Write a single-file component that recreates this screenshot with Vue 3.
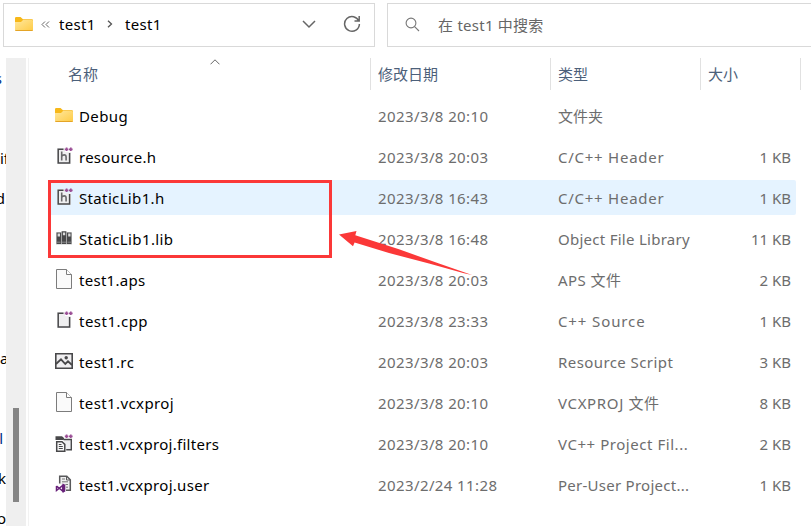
<script setup>
const files = [
  { name: 'Debug', nameGap: 0.4, date: '2023/3/8 20:10', type: '文件夹', typeGap: 0, size: '', icon: 'folder' },
  { name: 'resource.h', nameGap: 0.25, date: '2023/3/8 20:03', type: 'C/C++ Header', typeGap: 0.75, size: '1 KB', icon: 'header' },
  { name: 'StaticLib1.h', nameGap: 0.35, date: '2023/3/8 16:43', type: 'C/C++ Header', typeGap: 0.75, size: '1 KB', icon: 'header', selected: true },
  { name: 'StaticLib1.lib', nameGap: 0.38, date: '2023/3/8 16:48', type: 'Object File Library', typeGap: 0.27, size: '11 KB', icon: 'lib' },
  { name: 'test1.aps', nameGap: 0.28, date: '2023/3/8 20:03', type: 'APS 文件', typeGap: 0.45, size: '2 KB', icon: 'page' },
  { name: 'test1.cpp', nameGap: 0.48, date: '2023/3/8 23:33', type: 'C++ Source', typeGap: 0.88, size: '1 KB', icon: 'cpp' },
  { name: 'test1.rc', nameGap: 0.38, date: '2023/3/8 20:03', type: 'Resource Script', typeGap: 0.42, size: '3 KB', icon: 'image' },
  { name: 'test1.vcxproj', nameGap: 0.4, date: '2023/3/8 20:10', type: 'VCXPROJ 文件', typeGap: 0.65, size: '8 KB', icon: 'page' },
  { name: 'test1.vcxproj.filters', nameGap: 0.29, date: '2023/3/8 20:10', type: 'VC++ Project Fil...', typeGap: 0.55, size: '2 KB', icon: 'filters' },
  { name: 'test1.vcxproj.user', nameGap: 0.3, date: '2023/2/24 11:28', type: 'Per-User Project...', typeGap: 0.26, size: '1 KB', icon: 'user' },
]
// The tree panel is scrolled sideways: each row shows only the tail of its label.
const nav = [
  { text: 's', tail: 4 }, { text: '' }, { text: 'if' }, { text: 'd', tail: 1 }, { text: '' }, { text: '' },
  { text: '' }, { text: 'a' }, { text: '' }, { text: 'l', tail: 3 }, { text: 'k', tail: 0 }, { text: 'o', tail: 0 },
]
</script>

<template>
  <div class="window">
    <header class="toolbar">
      <div class="address">
        <svg class="folder" width="18" height="15" viewBox="0 0 18 15">
          <path d="M0 1.2Q0 0 1.2 0H5.5L8 2.2H17Q18 2.2 18 3.2V6H0Z" fill="#f7b819" />
          <path d="M0 5H6L8 3H17Q18 3 18 4V13Q18 14 17 14H1Q0 14 0 13Z" fill="url(#fold)" />
          <path d="M.4 13.5H17.6" stroke="#e4a427" />
        </svg>
        <svg class="dbl" width="9" height="7" viewBox="0 0 9 7"><path d="M4 .5L1 3.5L4 6.5M8 .5L5 3.5L8 6.5" /></svg>
        <span class="crumb">test1</span>
        <svg class="sep" width="6" height="8" viewBox="0 0 6 8"><path d="M1 .7L4.5 4L1 7.3" /></svg>
        <span class="crumb">test1</span>
        <svg class="down" width="14" height="9" viewBox="0 0 14 9"><path d="M1 1L7 7L13 1" /></svg>
        <svg class="refresh" width="18" height="18" viewBox="0 0 18 18"><path d="M15.9 6.2A7.4 7.4 0 1 0 16.4 9M16.2 1V6.1H11.5" /></svg>
      </div>
      <div class="search">
        <svg width="15" height="15" viewBox="0 0 15 15"><circle cx="6" cy="6" r="4.9" /><path d="M9.6 9.6L14 14" /></svg>
        <span>在 test1 中搜索</span>
      </div>
    </header>

    <main class="body">
      <nav class="tree">
        <div
          v-for="(n, i) in nav"
          :key="i"
          class="node"
          :class="{ head: i === 0 || i === 9, cut: n.tail !== undefined }"
          :style="{ paddingRight: (n.tail || 0) + 'px' }"
        >{{ n.text }}</div>
      </nav>
      <div class="scroll"><div class="thumb"></div></div>

      <section class="pane">
        <div class="columns">
          <div class="col first">
            名称
            <svg class="sort" width="10" height="6" viewBox="0 0 10 6"><path d="M.5 5.3L5 .8L9.5 5.3" /></svg>
          </div>
          <div class="col">修改日期</div>
          <div class="col">类型</div>
          <div class="col">大小</div>
        </div>

        <div class="files">
          <div v-for="f in files" :key="f.name" class="row" :class="{ selected: f.selected }">
            <div class="icon">
              <svg v-if="f.icon === 'folder'" width="20" height="22" viewBox="0 -1 20 22">
                <path d="M1 4.2Q1 3 2.2 3H6.5L9 5.2H18Q19 5.2 19 6.2V9H1Z" fill="#f7b819" />
                <path d="M1 8H7L9 6H18Q19 6 19 7V16Q19 17 18 17H2Q1 17 1 16Z" fill="url(#fold)" />
                <path d="M1.4 16.5H18.6" stroke="#e4a427" />
              </svg>
              <svg v-else-if="f.icon === 'header' || f.icon === 'cpp'" width="20" height="22" viewBox="0 0 20 22">
                <path d="M3 3H11V7H17V19H3Z" fill="#efeff0" />
                <path d="M9.5 4.2H4.2V18H15.6V8" fill="none" stroke="#48484a" stroke-width="1.5" />
                <path v-if="f.icon === 'header'" d="M7.7 6.5V15.5M7.7 11.4Q8.6 9.9 10.2 9.9Q12.1 9.9 12.1 12V15.5" fill="none" stroke="#6a6a6c" stroke-width="1.6" />
                <path d="M10.8 4.3H14.4M12.6 2.5V6.1M15 4.3H18.6M16.8 2.5V6.1" stroke="#9b4f96" stroke-width="1.7" />
              </svg>
              <svg v-else-if="f.icon === 'lib'" width="20" height="22" viewBox="0 0 20 22">
                <path d="M2 5H18V18H2Z" fill="#e2e2e2" />
                <path d="M2.5 5.5H7V17H2.5ZM7.6 4.3H12.4V17H7.6ZM13 5.5H17.5V17H13Z" fill="#48484a" />
                <path d="M3.6 6.5H6V9.5H3.6ZM8.9 5.6H11.2V8.2H8.9ZM14.2 6.5H16.5V9.5H14.2Z" fill="#dcdcdc" />
                <path d="M3 15.2H6.5M8 15.2H12M13.5 15.2H17" stroke="#8a8a8a" />
              </svg>
              <svg v-else-if="f.icon === 'page'" width="20" height="22" viewBox="0 0 20 22">
                <path d="M2.5 1.5H12.5L17.5 6.5V20.5H2.5Z" fill="#fafafa" stroke="#7c7c7c" />
                <path d="M12.5 1.5V6.5H17.5" fill="#fff" stroke="#7c7c7c" />
              </svg>
              <svg v-else-if="f.icon === 'image'" width="20" height="22" viewBox="0 -1 20 22">
                <path d="M1.8 2.8H18.2V17.2H1.8Z" fill="#f0eff1" stroke="#48484a" stroke-width="1.6" />
                <path d="M2 13L7 8.3L11.3 13L14 10.3L18 14" fill="none" stroke="#48484a" stroke-width="1.8" />
                <circle cx="12.2" cy="6.7" r="1.7" fill="#48484a" />
              </svg>
              <svg v-else-if="f.icon === 'filters'" width="20" height="22" viewBox="0 -1 20 22">
                <path d="M1.5 3.2H8L10 5V7H1.5Z" fill="#48484a" />
                <path d="M9.5 6.5H17.3V16.7H12.2" fill="#efeff0" stroke="#48484a" stroke-width="1.4" />
                <path d="M2.7 8.7H8L10.8 11.4V18.2H2.7Z" fill="#f8f8f8" stroke="#48484a" stroke-width="1.5" />
                <path d="M4.8 11.5H7.5M4.8 13.5H8.8M4.8 15.5H8.8" stroke="#48484a" />
                <path d="M10.8 3.3H14.4M12.6 1.5V5.1M15 3.3H18.6M16.8 1.5V5.1" stroke="#9b4f96" stroke-width="1.7" />
              </svg>
              <svg v-else width="20" height="22" viewBox="0 -.5 20 22">
                <path d="M5.7 10V2.7H12.8L16.3 6.2V16.7H12" fill="#efeff0" stroke="#59595b" stroke-width="1.5" />
                <path d="M12.5 3V6.5H16" fill="none" stroke="#59595b" />
                <path d="M8 5.5H11M8 8.3H14M11.5 11H14M12 13.7H14" stroke="#777" />
                <path d="M2.5 12.5V17L8.8 11.8V17.7L2.5 12.5" fill="none" stroke="#68217a" stroke-width="1.5" />
                <path d="M8.5 10L11.3 11.2V18L8.5 19.2Z" fill="#68217a" />
              </svg>
            </div>
            <div class="name" :style="{ letterSpacing: f.nameGap + 'px' }">{{ f.name }}</div>
            <div class="meta date">{{ f.date }}</div>
            <div class="meta" :style="{ letterSpacing: f.typeGap + 'px' }">{{ f.type }}</div>
            <div class="meta size">{{ f.size }}</div>
          </div>
        </div>
      </section>
    </main>

    <div class="marker"></div>
    <svg class="arrow" width="134" height="46" viewBox="0 0 134 46">
      <path d="M0 3.5L17.5 0L16.3 4.2L60 18.3L100 32.5L133 44L125 42.3L90 32.6L50 22L15.6 11.5L14 15.2Z" fill="#fb3838" />
    </svg>
    <svg class="defs" width="0" height="0">
      <defs>
        <linearGradient id="fold" x1="0" y1="0" x2="1" y2="1"><stop stop-color="#ffe79c" /><stop offset="1" stop-color="#fecb45" /></linearGradient>
      </defs>
    </svg>
  </div>
</template>

<style>
body { margin: 0; background: #fff; overflow: hidden; }
</style>

<style scoped>
.window { position: relative; width: 811px; height: 526px; overflow: hidden; background: #fff; display: flex; flex-direction: column; font-family: "Noto Sans", "Noto Sans CJK SC", sans-serif; font-size: 15px; color: #000; }
svg { display: block; flex: none; }
.toolbar { display: flex; gap: 12px; padding: 3px 0 0 3px; height: 44px; width: 820px; flex: none; }
.address, .search { box-sizing: border-box; height: 44px; border: 1px solid #d9d9d9; display: flex; align-items: center; }
.address { width: 372px; padding: 0 13px 2px 11px; }
.dbl, .sep, .down, .refresh, .search svg, .sort { fill: none; }
.dbl { margin-left: 8px; stroke: #666; }
.crumb { line-height: 20px; letter-spacing: .3px; }
.dbl + .crumb { margin-left: 9px; width: 36px; }
.sep { margin: 0 12px; stroke: #555; stroke-width: 1.3; }
.down { margin-left: auto; stroke: #666; stroke-width: 1.5; }
.refresh { margin-left: 27px; stroke: #666; stroke-width: 1.5; }
.search { flex: 1; padding: 0 0 2px 17px; color: #666; }
.search svg { stroke: #777; stroke-width: 1.1; }
.search span { margin-left: 18px; letter-spacing: .25px; }
.body { display: flex; flex: 1; padding-top: 11px; min-height: 0; }
.tree { width: 6px; overflow: hidden; }
.node { box-sizing: border-box; height: 40px; line-height: 41px; width: 6px; display: flex; }
.node.head { color: #003087; }
.node.cut { justify-content: flex-end; }
.scroll { width: 20px; background: #efefef; display: flex; flex-direction: column; align-items: center; }
.thumb { width: 6px; height: 94px; margin-top: 350px; background: #858585; }
.pane { margin-left: 2px; border-left: 1px solid #f2f2f2; flex: 1; }
.columns { display: grid; grid-template-columns: 342px 180px 150px 100px; height: 32px; color: #4c607a; }
.col { border-right: 1px solid #e1e1e1; box-sizing: border-box; padding-left: 7px; line-height: 32px; }
.col.first { padding-left: 39px; display: flex; }
.sort { margin: 1px 0 0 112px; stroke: #666; }
.files { display: flex; flex-direction: column; gap: 6px; padding: 8px 0 0 20px; }
.row { width: 747px; height: 35px; box-sizing: border-box; border-radius: 2px; display: grid; grid-template-columns: 30px 299px 180px 148px 85px; align-items: start; white-space: nowrap; }
.row.selected { background: #e5f3ff; }
.icon { padding: 6px 0 0 5px; }
.name, .meta { line-height: 37px; }
.meta { color: #6d6d6d; }
.date { letter-spacing: .4px; }
.size { text-align: right; }
.marker { position: absolute; left: 48px; top: 180px; width: 278px; height: 72px; border: 3px solid #fb3838; }
.arrow { position: absolute; left: 339px; top: 231px; }
.defs { position: absolute; }
</style>
